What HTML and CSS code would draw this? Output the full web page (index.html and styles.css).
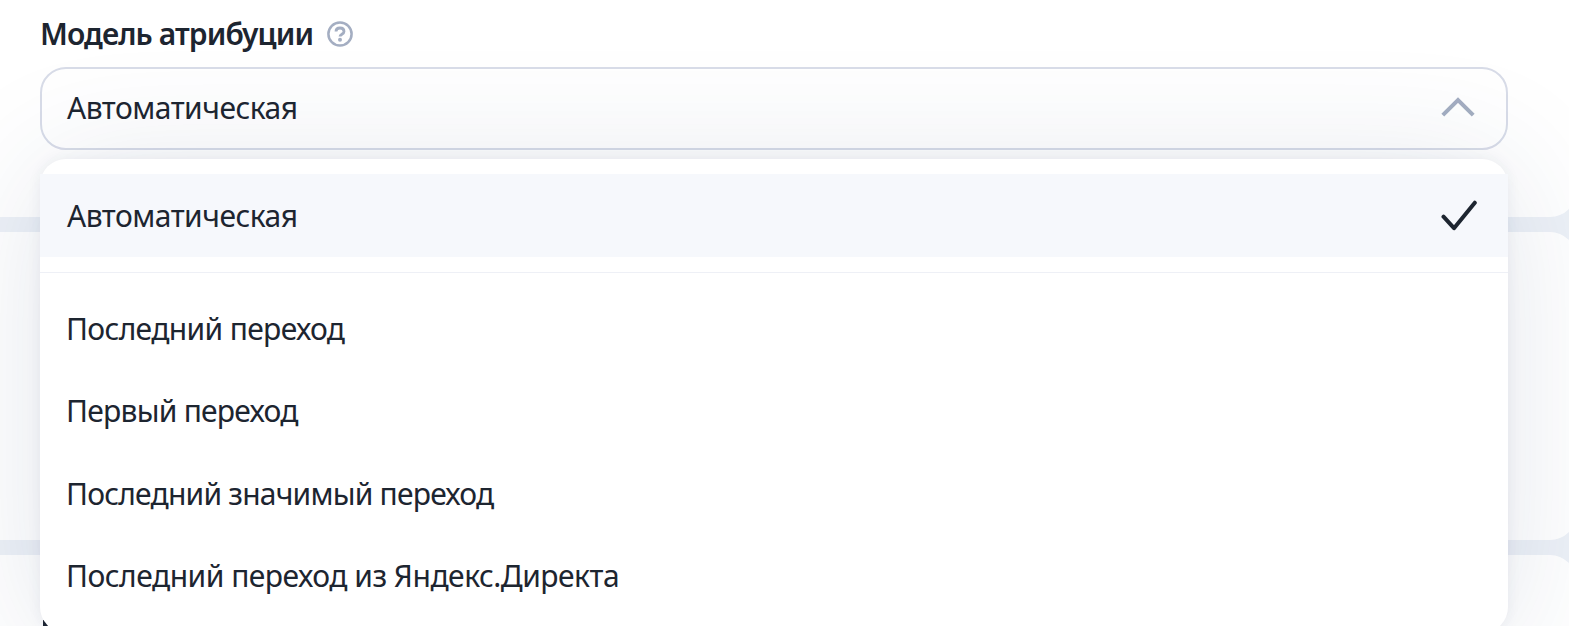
FILE: index.html
```html
<!DOCTYPE html>
<html lang="ru">
<head>
<meta charset="utf-8">
<title>Модель атрибуции</title>
<link rel="stylesheet" href="styles.css">
</head>
<body>
<main class="page">
  <section class="card card-first">
    <div class="label">
      <span class="label-text">Модель атрибуции</span>
      <svg class="help" viewBox="0 0 26 26" fill="none" stroke="#a4aec2">
        <circle cx="13" cy="13" r="11.6" stroke-width="2.5"/>
        <path d="M9 10.6C9 8.2 10.7 7 13 7s4 1.300 4 3.400c0 2.900-4 2.700-4 5.200" stroke-width="2.800"/>
        <circle cx="13" cy="18.700" r="2" fill="#a4aec2" stroke="none"/>
      </svg>
    </div>
    <div class="select">
      <span class="auto">Автоматическая</span>
      <svg class="chevron" viewBox="0 0 34 20" fill="none" stroke="#a4aec2" stroke-width="4"><path d="M1.800 18.200 17 3l15.200 15.200"/></svg>
      <div class="menu">
        <div class="option selected">
          <span class="auto">Автоматическая</span>
          <svg class="check" viewBox="0 0 36 32" fill="none" stroke="#1d2530" stroke-width="4" stroke-linecap="round" stroke-linejoin="round"><path d="M2.500 16.700 13 28.200 33.800 2.700"/></svg>
        </div>
        <div class="divider"></div>
        <div class="option"><span class="last">Последний переход</span></div>
        <div class="option"><span class="first">Первый переход</span></div>
        <div class="option"><span class="significant">Последний значимый переход</span></div>
        <div class="option"><span class="direct">Последний переход из Яндекс.Директа</span></div>
      </div>
    </div>
  </section>
  <section class="card card-middle"></section>
  <section class="card card-last"><div class="stem"></div></section>
</main>
</body>
</html>
```
FILE: styles.css
```css
* { box-sizing: border-box; }
body {
  margin: 0;
  overflow: hidden;
  background: #edf1f7;
  color: #1d2530;
  font: 30px/40px "Noto Sans", sans-serif;
}
.page {
  width: 1576px;
  height: 626px;
  display: flex;
  flex-direction: column;
  gap: 15px;
  overflow: hidden;
}
.card {
  flex: none;
  background: #fff;
  border-radius: 0 26px 26px 0;
}
.card-first {
  height: 217px;
  padding: 14px 68px 0 40px;
  border-top-right-radius: 0;
}
.card-middle { height: 308px; }
.card-last { height: 200px; padding: 65px 0 0 43px; }
.stem { width: 6px; height: 22px; background: #1d2530; }
.label {
  display: flex;
  align-items: center;
  gap: 14px;
  height: 40px;
  margin-bottom: 13px;
  font-weight: 600;
}
.label-text { width: 273px; white-space: nowrap; letter-spacing: -0.9px; }
.help { width: 26px; height: 26px; }
.select {
  position: relative;
  display: flex;
  align-items: center;
  justify-content: space-between;
  width: 1468px;
  height: 83px;
  padding: 0 31px 1px 25px;
  border: 2px solid #d8dce8;
  border-radius: 26px;
}
.chevron { width: 34px; height: 20px; margin-bottom: 2px; }
.check { width: 36px; height: 32px; }
.menu {
  position: absolute;
  top: 90px;
  left: -2px;
  width: 1468px;
  padding: 15px 0;
  background: #fff;
  border-radius: 26px;
  box-shadow: 0 0 14px rgba(40, 55, 100, 0.07), 0 10px 130px rgba(40, 60, 110, 0.13);
}
.option {
  display: flex;
  align-items: center;
  justify-content: space-between;
  height: 82.5px;
  padding: 0 31px 1px 26px;
  white-space: nowrap;
}
.selected { height: 83px; padding: 0 31px 0 27px; background: #f6f8fc; }
.divider { height: 1px; margin: 15px 0; background: #eef0f6; }
.auto { letter-spacing: -0.5px; }
.last { letter-spacing: -0.65px; }
.first { letter-spacing: -0.75px; }
.significant { letter-spacing: -0.78px; }
.direct { letter-spacing: -0.5px; }
```
